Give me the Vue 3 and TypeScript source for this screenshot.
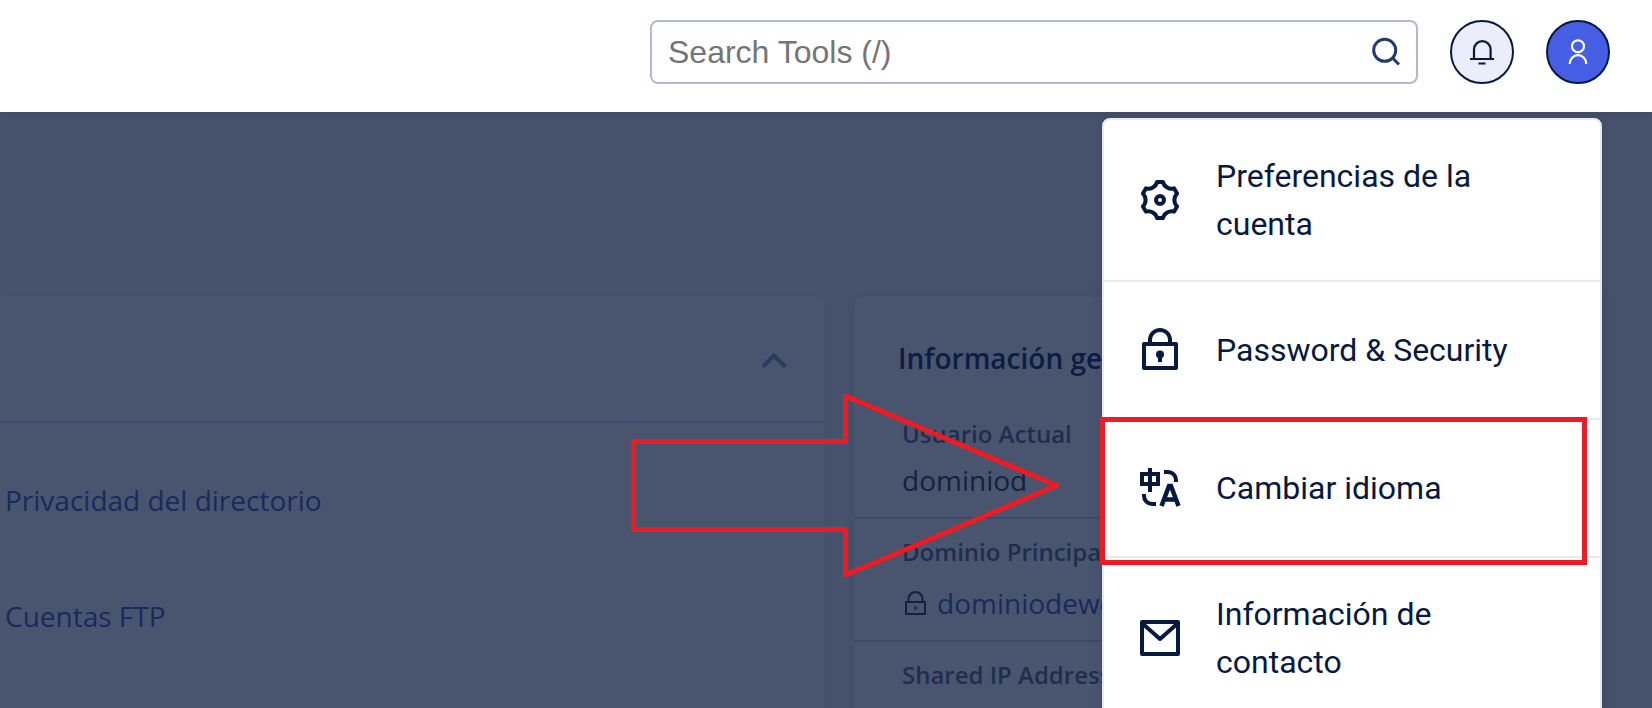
<script setup lang="ts">
import { ref } from 'vue'

interface MenuItem {
  id: string
  label: string
  highlighted?: boolean
}

interface InfoRow {
  label: string
  value: string
  secure?: boolean
}

const query = ref('')
const expanded = ref(true)

const menu: MenuItem[] = [
  { id: 'preferences', label: 'Preferencias de la cuenta' },
  { id: 'security', label: 'Password & Security' },
  { id: 'language', label: 'Cambiar idioma', highlighted: true },
  { id: 'contact', label: 'Información de contacto' },
]

const links: string[] = ['Privacidad del directorio', 'Cuentas FTP']

const info: InfoRow[] = [
  { label: 'Usuario Actual', value: 'dominiod' },
  { label: 'Dominio Principal', value: 'dominiodeweb', secure: true },
  { label: 'Shared IP Address', value: '' },
]

// Six-toothed gear outline centred on 24,24
function gearPath(): string {
  const at = (x: number, y: number, step: number): string => {
    const a = (step * Math.PI) / 3
    const px = 24 + x * Math.cos(a) - y * Math.sin(a)
    const py = 24 + x * Math.sin(a) + y * Math.cos(a)
    return `${px.toFixed(2)} ${py.toFixed(2)}`
  }
  let d = `M${at(-3, -18, 0)}`
  for (let i = 0; i < 6; i++) {
    d += `L${at(3, -18, i)}C${at(4.2, -13.2, i)} ${at(9.3, -10.2, i)} ${at(-3, -18, i + 1)}`
  }
  return d + 'Z'
}
const gear = gearPath()
</script>

<template>
  <div class="page">
    <header class="topbar">
      <form class="search" role="search" @submit.prevent>
        <input v-model="query" type="text" placeholder="Search Tools (/)" aria-label="Search Tools" />
        <button class="search-btn" type="submit" aria-label="Search">
          <svg width="32" height="32" viewBox="0 0 32 32" fill="none" stroke="#233a70" stroke-width="3">
            <circle cx="15.700" cy="14.300" r="11" />
            <path d="M23 21.500L30 28.500" />
          </svg>
        </button>
      </form>
      <button class="round" type="button" aria-label="Notifications">
        <svg width="32" height="32" viewBox="0 0 32 32" fill="none" stroke="#08193e" stroke-width="2.200">
          <path d="M4 23h24M8 23V13.500a8.300 8.300 0 0 1 16.600 0V23M12.500 27.500h7" />
        </svg>
      </button>
      <button class="round user" type="button" aria-label="Account" aria-expanded="true">
        <svg width="32" height="32" viewBox="0 0 32 32" fill="none" stroke="#fff" stroke-width="2.200">
          <circle cx="16" cy="10.300" r="6" />
          <path d="M7.700 28a8.300 8.800 0 0 1 16.600 0" />
        </svg>
      </button>

      <nav class="menu" aria-label="Account menu">
        <ul>
          <li v-for="item in menu" :key="item.id">
            <a href="#" class="menu-link">
              <svg class="menu-icon" width="48" height="48" viewBox="0 0 48 48" fill="none" stroke="#08193e" stroke-width="4">
                <g v-if="item.id === 'preferences'" stroke-linejoin="round">
                  <path :d="gear" />
                  <circle cx="24" cy="24" r="4" />
                </g>
                <g v-else-if="item.id === 'security'" stroke-linejoin="round">
                  <path d="M8 18h32v24H8z" />
                  <path d="M14 17v-3a10 10 0 0 1 20 0v3" />
                  <circle cx="24" cy="28.500" r="4" fill="#08193e" stroke="none" />
                  <path d="M24 28v8" />
                </g>
                <g v-else-if="item.id === 'language'">
                  <path d="M6 10h16v10H6zM14 4v24" />
                  <path d="M28 8h4a8 8 0 0 1 8 8v2M8 30v2a8 8 0 0 0 8 8h4" />
                  <path d="M25.500 42L33 22h2L42.500 42M28.500 35.500h11" stroke-width="4.500" />
                </g>
                <g v-else stroke-linejoin="round">
                  <path d="M6 8h36v32H6z" />
                  <path d="M7 10l17 15 17-15" />
                </g>
              </svg>
              <span>{{ item.label }}</span>
            </a>
            <template v-if="item.highlighted">
              <span class="frame"></span>
              <svg class="arrow" width="428" height="186" viewBox="0 0 428 186" fill="none" stroke="#ed1c24" stroke-width="5" stroke-linejoin="round">
                <path d="M2.500 48.500H214.500V3L425.500 92.500L214.500 182V136.500H2.500Z" />
              </svg>
            </template>
          </li>
        </ul>
      </nav>
    </header>

    <main class="content">
      <section class="card tools">
        <div class="tools-head">
          <button class="toggle" type="button" aria-label="Toggle section" :aria-expanded="expanded" @click="expanded = !expanded">
            <svg width="28" height="20" viewBox="0 0 28 20" fill="none" stroke="#2c3a5f" stroke-width="4" stroke-linecap="round">
              <path d="M4 16.500L14 6.500L24 16.500" />
            </svg>
          </button>
        </div>
        <ul v-show="expanded" class="tools-list">
          <li v-for="link in links" :key="link"><a href="#">{{ link }}</a></li>
        </ul>
      </section>

      <section class="card info">
        <h2>Información general</h2>
        <dl>
          <div v-for="row in info" :key="row.label" class="row">
            <dt>{{ row.label }}</dt>
            <dd :class="{ secure: row.secure }">
              <template v-if="row.secure">
                <svg width="24" height="26" viewBox="0 0 24 26" fill="none" stroke="#16203f" stroke-width="2">
                  <path d="M4 12h19v12H4zM6.500 12V9a7 7 0 0 1 14 0v3M13.500 16v4" stroke-linejoin="round" />
                </svg>
                <a href="#">{{ row.value }}</a>
              </template>
              <template v-else>{{ row.value }}</template>
            </dd>
          </div>
        </dl>
      </section>
    </main>
  </div>
</template>

<style>
html,
body {
  margin: 0;
}
</style>

<style scoped>
.page {
  display: flex;
  flex-direction: column;
  height: 100vh;
  overflow: hidden;
  background: #47526c;
  font-family: 'Open Sans', sans-serif;
}

ul,
dl,
dd,
h2 {
  margin: 0;
  padding: 0;
  list-style: none;
}

a {
  text-decoration: none;
}

button {
  padding: 0;
  cursor: pointer;
}

svg {
  display: block;
  flex: none;
}

.topbar {
  position: relative;
  z-index: 1;
  display: flex;
  flex: none;
  align-items: flex-start;
  justify-content: flex-end;
  gap: 32px;
  box-sizing: border-box;
  height: 112px;
  padding: 20px 42px;
  background: #fff;
  box-shadow: 0 2px 8px rgba(20, 28, 45, 0.15);
}

.search {
  display: flex;
  flex: 0 1 768px;
  box-sizing: border-box;
  height: 64px;
  border: 2px solid #b3bad0;
  border-radius: 8px;
  background: #fff;
}

.search input {
  flex: 1;
  min-width: 0;
  padding: 0 16px;
  border: 0;
  outline: 0;
  background: transparent;
  color: #08193e;
  font: 32px/36px 'Liberation Sans', Arial, sans-serif;
}

.search input::placeholder {
  color: #757575;
  opacity: 1;
}

.search-btn {
  display: flex;
  align-items: center;
  justify-content: center;
  width: 62px;
  border: 0;
  background: transparent;
}

.round {
  display: flex;
  flex: none;
  align-items: center;
  justify-content: center;
  box-sizing: border-box;
  width: 64px;
  height: 64px;
  border: 2px solid #08193e;
  border-radius: 50%;
  background: #ebedfa;
}

.round.user {
  background: #455ee4;
}

.menu {
  position: absolute;
  top: 118px;
  right: 50px;
  box-sizing: border-box;
  width: 500px;
  border: 2px solid #e8e8ef;
  border-radius: 8px;
  background: #fff;
  box-shadow: 0 2px 12px rgba(20, 28, 45, 0.15);
}

.menu li {
  position: relative;
  border-bottom: 2px solid #e8e8ef;
}

.menu-link {
  display: flex;
  align-items: center;
  gap: 32px;
  box-sizing: border-box;
  min-height: 136px;
  padding: 32px 48px 32px 32px;
  color: #08193e;
  font: 400 32px/48px Roboto, sans-serif;
}

.frame {
  position: absolute;
  top: -3px;
  right: 13px;
  bottom: -9px;
  left: -4px;
  border: 5px solid #ed1c24;
  pointer-events: none;
}

.arrow {
  position: absolute;
  top: -27px;
  left: -473px;
  pointer-events: none;
}

.content {
  display: flex;
  flex: 1;
  gap: 30px;
  padding: 185px 52px 0 0;
}

.card {
  background: #49556e;
  box-shadow: 0 0 12px rgba(30, 40, 70, 0.12);
}

.tools {
  flex: 1;
  border-radius: 0 8px 0 0;
  box-shadow: 0 0 16px rgba(30, 40, 70, 0.05);
}

.tools-head {
  display: flex;
  align-items: center;
  justify-content: flex-end;
  height: 124px;
  padding-right: 36px;
  border-bottom: 2px solid #424d6b;
}

.toggle {
  border: 0;
  background: transparent;
}

.tools-list {
  display: flex;
  flex-direction: column;
  gap: 78px;
  padding: 58px 5px 0;
}

.tools-list a {
  display: block;
  color: #182a5c;
  font-size: 28px;
  line-height: 38px;
}

.info {
  flex: 0 1 746px;
  border-radius: 8px 8px 0 0;
}

.info h2 {
  padding: 42px 44px 24px;
  color: #0c1c42;
  font-size: 28px;
  font-weight: 600;
  line-height: 38px;
}

.row {
  padding: 16px 48px 18px;
  border-bottom: 2px solid #3e4962;
}

.row dt {
  color: #202d50;
  font-size: 24px;
  font-weight: 600;
  line-height: 33px;
}

.row dd {
  margin-top: 11px;
  color: #16203f;
  font-size: 28px;
  line-height: 38px;
}

.row dd.secure {
  display: flex;
  align-items: center;
  gap: 11px;
  margin-top: 16px;
}

.row dd a {
  color: #182a5c;
}
</style>
